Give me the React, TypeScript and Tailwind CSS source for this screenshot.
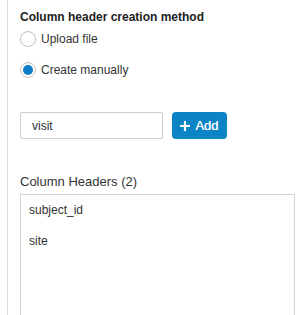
import { useState } from 'react';

type Method = 'upload' | 'manual';

function Radio({ checked }: { checked: boolean }) {
  return (
    <span className="flex items-center justify-center w-4 h-4 rounded-full border border-[#c4c4c4] bg-white shadow-[inset_0_1px_1px_rgba(0,0,0,0.05)]">
      {checked && <span className="w-[10px] h-[10px] rounded-full bg-[#0a7fc7]" />}
    </span>
  );
}

export default function App() {
  const [method, setMethod] = useState<Method>('manual');
  const [value, setValue] = useState('visit');
  const [headers, setHeaders] = useState<string[]>(['subject_id', 'site']);

  const addHeader = () => {
    const v = value.trim();
    if (!v) return;
    setHeaders([...headers, v]);
    setValue('');
  };

  return (
    <div className="w-[306px] h-[315px] overflow-hidden bg-white font-['Liberation_Sans',Arial,sans-serif] text-[#333]">
      <div className="ml-[7px] h-full border-l border-[#dcdcdc] pl-[12px] pr-[11px] pt-[9px]">
        {/* Creation method */}
        <div className="text-[12px] leading-4 font-bold text-[#222]">Column header creation method</div>
        <div className="mt-[6px] flex flex-col gap-[15px]">
          <label className="flex items-center gap-[5px] text-[12px] leading-4 cursor-pointer" onClick={() => setMethod('upload')}>
            <Radio checked={method === 'upload'} />
            <span>Upload file</span>
          </label>
          <label className="flex items-center gap-[5px] text-[12px] leading-4 cursor-pointer" onClick={() => setMethod('manual')}>
            <Radio checked={method === 'manual'} />
            <span>Create manually</span>
          </label>
        </div>

        {/* New header input */}
        <div className="mt-[34px] flex items-center gap-[9px]">
          <input
            value={value}
            onChange={(e) => setValue(e.target.value)}
            className="w-[143px] h-[27px] rounded-[2px] border border-[#cfcfcf] px-[11px] text-[12px] text-[#333] outline-none"
          />
          <button
            type="button"
            onClick={addHeader}
            className="flex items-center justify-center gap-[5px] w-[55px] h-[27px] rounded-[4px] bg-[#0b84c6] text-white text-[13px] font-normal [text-shadow:0_0_0.4px_#fff]"
          >
            <svg className="w-[10px] h-[10px]" viewBox="0 0 10 10" fill="none" stroke="currentColor" strokeWidth={2.2}>
              <path d="M5 0v10M0 5h10" />
            </svg>
            Add
          </button>
        </div>

        {/* Header list */}
        <div className="mt-[35px] text-[13px] leading-4 text-[#333]">Column Headers ({headers.length})</div>
        <div className="mt-[4px] h-[200px] border border-[#d4d4d4] pt-[7px] pl-[8px] flex flex-col gap-[15px]">
          {headers.map((h) => (
            <div key={h} className="text-[12px] leading-4 text-[#333]">{h}</div>
          ))}
        </div>
      </div>
    </div>
  );
}
